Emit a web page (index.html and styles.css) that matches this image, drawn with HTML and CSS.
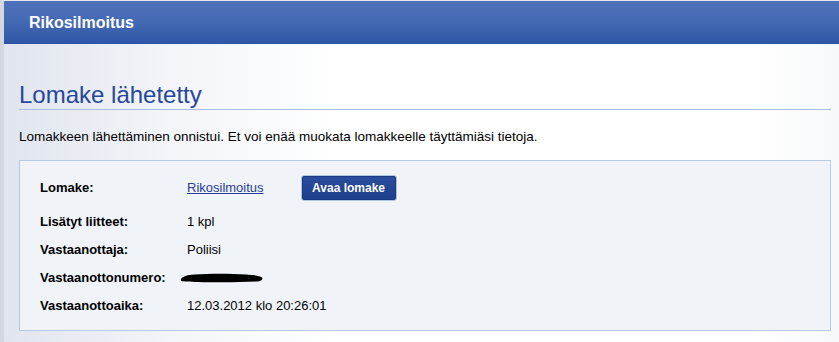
FILE: index.html
```html
<!DOCTYPE html>
<html lang="fi">
<head>
<meta charset="utf-8">
<title>Rikosilmoitus</title>
<link rel="stylesheet" href="styles.css">
</head>
<body>
<div class="page">
  <header class="topbar">
    <span class="brand">Rikosilmoitus</span>
  </header>
  <main class="content">
    <h1 class="title">Lomake lähetetty</h1>
    <p class="intro">Lomakkeen lähettäminen onnistui. Et voi enää muokata lomakkeelle täyttämiäsi tietoja.</p>
    <section class="summary">
      <div class="row row-first">
        <span class="label">Lomake:</span>
        <span class="value"><a class="link" href="#">Rikosilmoitus</a><button class="btn" type="button">Avaa lomake</button></span>
      </div>
      <div class="row">
        <span class="label">Lisätyt liitteet:</span>
        <span class="value">1 kpl</span>
      </div>
      <div class="row">
        <span class="label">Vastaanottaja:</span>
        <span class="value">Poliisi</span>
      </div>
      <div class="row">
        <span class="label">Vastaanottonumero:</span>
        <span class="value value-redacted"><svg class="redact" width="84" height="12" viewBox="0 0 84 12"><path d="M1 7 C3 4 8 3 14 2.5 C30 1.5 50 1.5 66 2.5 C74 3 80 3.5 82 5.5 C83 7 82 9 78 9.5 C60 10.5 36 10.5 18 10 C10 9.8 3 9.6 1.5 9 C0.5 8.5 0.5 7.8 1 7 Z" fill="#000"/></svg></span>
      </div>
      <div class="row">
        <span class="label">Vastaanottoaika:</span>
        <span class="value">12.03.2012 klo 20:26:01</span>
      </div>
    </section>
  </main>
</div>
</body>
</html>
```

FILE: styles.css
```css
html, body {
  margin: 0;
  padding: 0;
  height: 100%;
}

body {
  font-family: "Liberation Sans", Arial, sans-serif;
  color: #000;
  background: #fff;
}

.page {
  min-height: 100%;
  box-sizing: border-box;
  border-left: 4px solid #d3d7df;
  border-top: 1px solid #e4e7ed;
  background: linear-gradient(to right, #e0e5ee 0%, #f3f5f9 20%, #ffffff 40%, #ffffff 90%, #f7f8fa 100%);
}

.topbar {
  height: 43px;
  display: flex;
  align-items: center;
  padding-left: 25px;
  background: linear-gradient(to bottom, #4e73ba 0%, #4469b3 50%, #2d55a5 100%);
}

.brand {
  color: #fff;
  font-weight: bold;
  font-size: 16px;
  line-height: 18px;
  margin-top: 1px;
}

.content {
  padding: 0 8px 12px 15px;
}

.title {
  margin: 37px 0 0 0;
  font-size: 24px;
  line-height: 28px;
  font-weight: normal;
  color: #27479b;
  border-bottom: 1px solid #a9bde3;
}

.intro {
  margin: 19px 0 0 0;
  font-size: 13.5px;
  line-height: 16px;
}

.summary {
  margin-top: 15px;
  border: 1px solid #b8cae8;
  background: #f0f4f9;
  padding: 13px 20px 11px 20px;
}

.row {
  display: flex;
  align-items: center;
  height: 28px;
  font-size: 13px;
  line-height: 15px;
}

.row-first {
  height: 26px;
  margin-bottom: 7px;
}

.label {
  width: 147px;
  flex: none;
  font-weight: bold;
}

.value {
  display: flex;
  align-items: center;
}

.link {
  color: #2a3d98;
  text-decoration: underline;
}

.btn {
  margin-left: 37px;
  width: 96px;
  height: 26px;
  box-sizing: border-box;
  border: 1px solid #b3c3e2;
  border-radius: 3px;
  background: linear-gradient(to bottom, #2a4d9c 0%, #1c3f8c 100%);
  box-shadow: inset 0 0 0 1px #183a84;
  color: #fff;
  font-family: "Liberation Sans", Arial, sans-serif;
  font-weight: bold;
  font-size: 12px;
  padding: 0;
  margin-top: 2px;
}

.value-redacted {
  margin-left: -7px;
  margin-top: 1px;
}

.redact {
  display: block;
}
```
